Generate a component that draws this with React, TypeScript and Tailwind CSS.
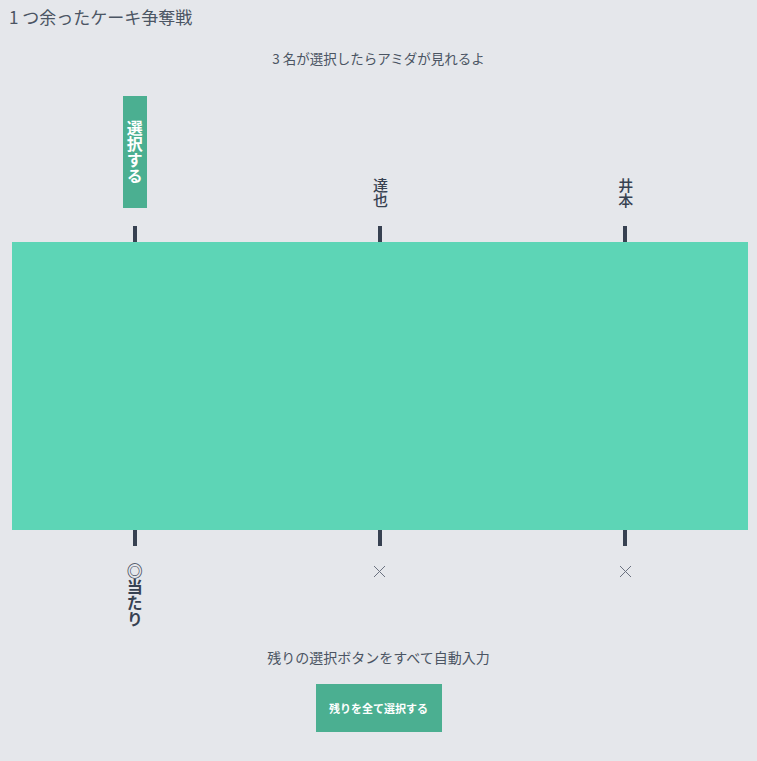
import React from 'react';

const players = [
  { name: null, result: '◎当たり' },
  { name: '達也', result: null },
  { name: '井本', result: null },
];

export default function App() {
  return (
    <div
      className="h-[761px] w-full bg-[#e5e7eb] text-[#374151]"
      style={{ fontFamily: '"Noto Sans CJK JP", "Noto Sans", sans-serif' }}
    >
      <h1 className="px-[9px] pt-[4px] text-[17px] leading-[26px] text-[#4b5563]">1 つ余ったケーキ争奪戦</h1>
      <p className="mt-[18px] text-center text-[13.5px] leading-[20px] text-[#4b5563]">3 名が選択したらアミダが見れるよ</p>

      {/* top labels */}
      <div className="ml-[12px] mr-[9px] grid h-[174px] grid-cols-3 items-end">
        {players.map((p, i) => (
          <div key={i} className="flex flex-col items-center">
            {p.name ? (
              <div className="mb-[18px] text-[15px] font-medium leading-[16px] [writing-mode:vertical-rl]">{p.name}</div>
            ) : (
              <button className="mb-[18px] flex h-[112px] w-[24px] items-center justify-center bg-[#4baf91] text-[16px] font-bold leading-[24px] text-white [writing-mode:vertical-rl]">
                選択する
              </button>
            )}
            <div className="h-[16px] w-[4px] bg-[#374151]" />
          </div>
        ))}
      </div>

      <div className="ml-[12px] mr-[9px] h-[288px] bg-[#5dd5b6]" />

      {/* results */}
      <div className="ml-[12px] mr-[9px] grid h-[107px] grid-cols-3 items-start">
        {players.map((p, i) => (
          <div key={i} className="flex flex-col items-center">
            <div className="h-[16px] w-[4px] bg-[#374151]" />
            {p.result ? (
              <div className="mt-[17px] text-[16px] font-bold leading-[16px] [writing-mode:vertical-rl]">{p.result}</div>
            ) : (
              <svg className="mt-[19px]" width="13" height="13" viewBox="0 0 13 13">
                <path d="M1 1L12 12M12 1L1 12" stroke="#6b7280" strokeWidth="1" />
              </svg>
            )}
          </div>
        ))}
      </div>

      <p className="mt-[10px] text-center text-[14px] leading-[20px] text-[#4b5563]">残りの選択ボタンをすべて自動入力</p>
      <div className="mt-[17px] flex justify-center">
        <button className="h-[48px] w-[126px] bg-[#4baf91] text-[11px] font-bold text-white">残りを全て選択する</button>
      </div>
    </div>
  );
}
